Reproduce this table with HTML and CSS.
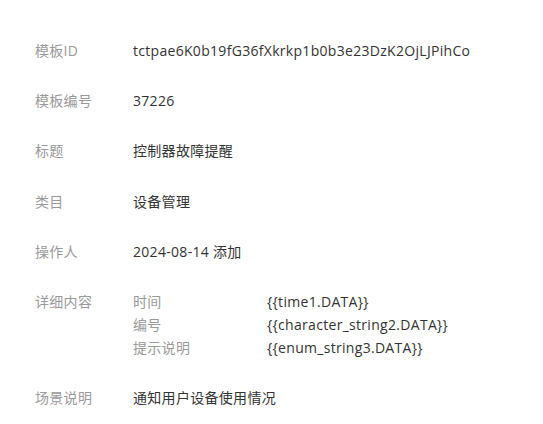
FILE: index.html
```html
<!DOCTYPE html>
<html lang="zh-CN">
<head>
<meta charset="utf-8">
<link rel="stylesheet" href="styles.css">
</head>
<body>
<div class="detail">
  <div class="row"><div class="label">模板ID</div><div class="value">tctpae6K0b19fG36fXkrkp1b0b3e23DzK2OjLJPihCo</div></div>
  <div class="row"><div class="label">模板编号</div><div class="value">37226</div></div>
  <div class="row"><div class="label">标题</div><div class="value">控制器故障提醒</div></div>
  <div class="row"><div class="label">类目</div><div class="value">设备管理</div></div>
  <div class="row"><div class="label">操作人</div><div class="value">2024-08-14 添加</div></div>
  <div class="row"><div class="label">详细内容</div>
    <div class="value fields">
      <div class="fname">时间</div><div class="fval">{{time1.DATA}}</div>
      <div class="fname">编号</div><div class="fval">{{character_string2.DATA}}</div>
      <div class="fname">提示说明</div><div class="fval">{{enum_string3.DATA}}</div>
    </div>
  </div>
  <div class="row"><div class="label">场景说明</div><div class="value">通知用户设备使用情况</div></div>
</div>
</body>
</html>
```
FILE: styles.css
```css
html, body {
  margin: 0;
  padding: 0;
  background: #fff;
}
body {
  font-family: "Open Sans", "Noto Sans CJK SC", sans-serif;
  font-size: 14px;
  letter-spacing: 0.3px;
  color: #333;
}
.detail {
  padding: 39px 0 0 35px;
  display: flex;
  flex-direction: column;
  gap: 27.2px;
}
.row {
  display: flex;
  line-height: 23px;
}
.label {
  width: 98px;
  height: 23px;
  flex: none;
  color: #999;
  white-space: nowrap;
}
.value {
  color: #333;
  height: 23px;
  white-space: nowrap;
}
.fields {
  height: auto;
  display: grid;
  grid-template-columns: 134px auto;
  grid-auto-rows: 23px;
}
.fname {
  color: #999;
  height: 23px;
}
.fval {
  color: #333;
  height: 23px;
}
```
